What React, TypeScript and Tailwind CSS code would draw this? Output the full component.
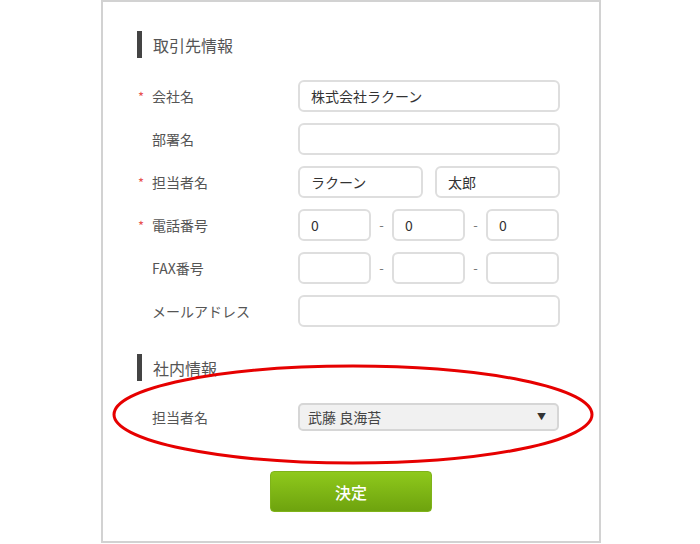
import React from "react";

const FONT = { fontFamily: '"Noto Sans CJK JP", "Noto Sans", sans-serif' };

function SectionTitle({ title }: { title: string }) {
  return (
    <div className="flex items-center h-[27px]">
      <div className="w-[5px] h-full bg-[#444]" />
      <span className="ml-[11px] text-[16px] text-[#555]">{title}</span>
    </div>
  );
}

function Field({ label, required, children }: { label: string; required?: boolean; children: React.ReactNode }) {
  return (
    <div className="flex items-center h-[32px] mt-[11px] first:mt-0">
      <div className="w-[161px] flex items-center text-[14px] text-[#555]">
        <span className="w-[15px] text-[#e8524f] text-[13px] leading-none pl-[1px]">{required ? "*" : ""}</span>
        <span>{label}</span>
      </div>
      {children}
    </div>
  );
}

function Box({ value, width }: { value?: string; width: string }) {
  return (
    <div className={`${width} h-[32px] border-2 border-[#dedede] rounded-[6px] bg-white flex items-center pl-[11px] text-[14px] text-[#333]`}>
      {value}
    </div>
  );
}

function Dash() {
  return <span className="w-[21px] text-center text-[13px] text-[#777]">-</span>;
}

export default function App() {
  return (
    <div className="relative w-[700px] h-[544px] bg-white" style={FONT}>
      <div className="ml-[101px] w-[500px] h-[543px] border-2 border-[#d2d2d2] pt-[29px] pl-[34px]">
        <SectionTitle title="取引先情報" />

        <div className="mt-[22px] flex flex-col">
          <Field label="会社名" required>
            <Box value="株式会社ラクーン" width="w-[262px]" />
          </Field>
          <Field label="部署名">
            <Box width="w-[262px]" />
          </Field>
          <Field label="担当者名" required>
            <div className="flex gap-[12px]">
              <Box value="ラクーン" width="w-[125px]" />
              <Box value="太郎" width="w-[125px]" />
            </div>
          </Field>
          <Field label="電話番号" required>
            <div className="flex items-center">
              <Box value="0" width="w-[73px]" />
              <Dash />
              <Box value="0" width="w-[73px]" />
              <Dash />
              <Box value="0" width="w-[73px]" />
            </div>
          </Field>
          <Field label="FAX番号">
            <div className="flex items-center">
              <Box width="w-[73px]" />
              <Dash />
              <Box width="w-[73px]" />
              <Dash />
              <Box width="w-[73px]" />
            </div>
          </Field>
          <Field label="メールアドレス">
            <Box width="w-[262px]" />
          </Field>
        </div>

        <div className="mt-[27px]">
          <SectionTitle title="社内情報" />
        </div>

        <div className="mt-[22px] flex items-center h-[28px]">
          <div className="w-[161px] pl-[15px] text-[14px] text-[#555]">担当者名</div>
          <div className="w-[261px] h-[28px] border-2 border-[#d6d6d6] rounded-[5px] bg-[#f1f1f1] flex items-center justify-between pl-[8px] pr-[11px] text-[14px] text-[#444]">
            <span>武藤 良海苔</span>
            <span className="text-[9px] text-[#333]">▼</span>
          </div>
        </div>

        <div className="mt-[40px] flex">
          <button className="ml-[133px] w-[162px] h-[41px] rounded-[4px] bg-gradient-to-b from-[#8fc91c] to-[#6ea30e] border border-[#7fb31a] text-white text-[16px] font-medium">
            決定
          </button>
        </div>
      </div>

      <svg className="absolute top-0 left-0 pointer-events-none" width="700" height="544">
        <ellipse cx="353" cy="414.5" rx="239" ry="48.5" fill="none" stroke="#e60000" strokeWidth="3" />
      </svg>
    </div>
  );
}
